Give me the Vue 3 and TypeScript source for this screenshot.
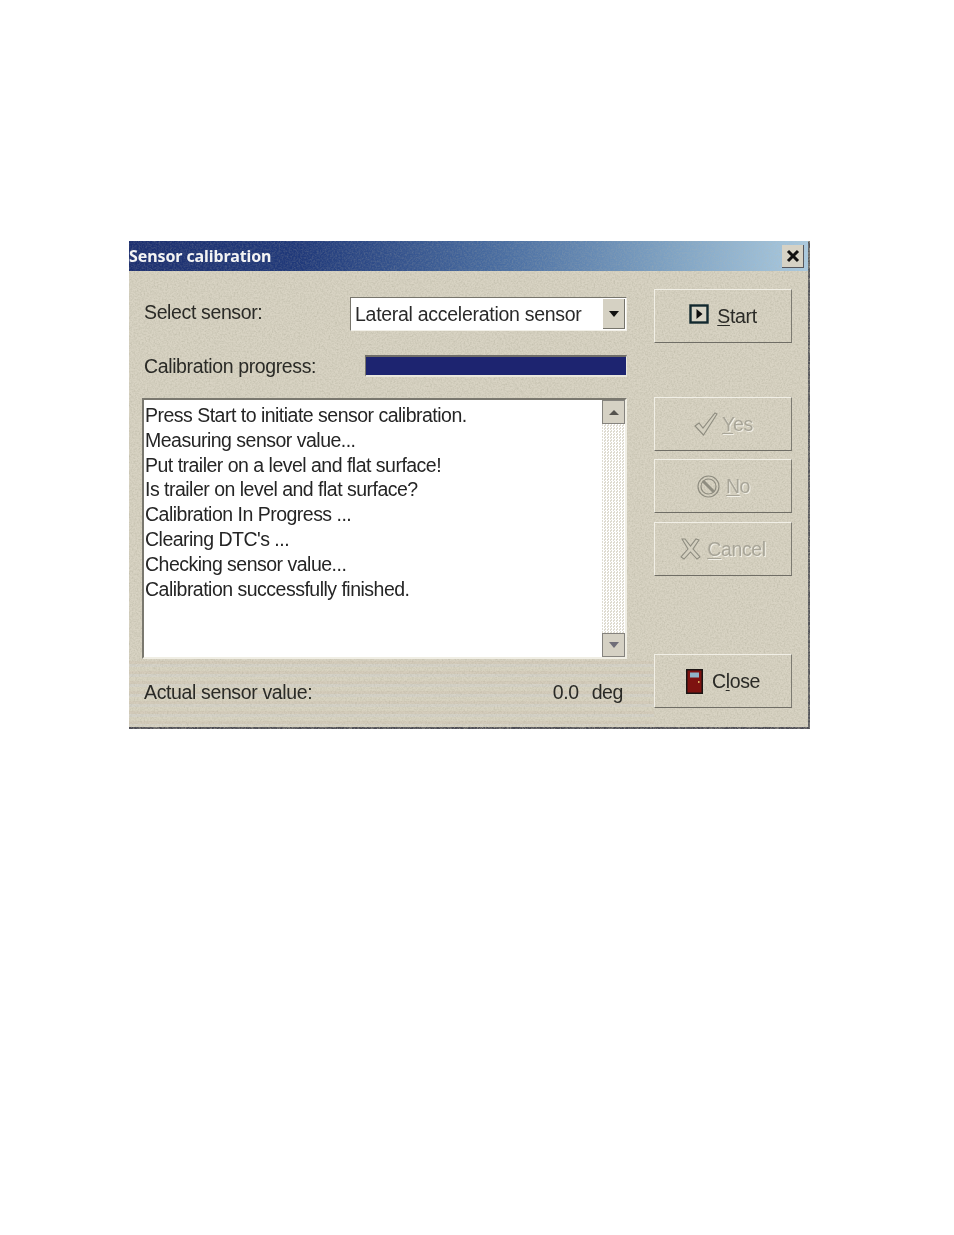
<script setup lang="ts">
const lines: string[] = [
  'Press Start to initiate sensor calibration.',
  'Measuring sensor value...',
  'Put trailer on a level and flat surface!',
  'Is trailer on level and flat surface?',
  'Calibration In Progress ...',
  "Clearing DTC's ...",
  'Checking sensor value...',
  'Calibration successfully finished.',
]
</script>

<template>
  <div class="page">
    <div class="window">
      <svg class="noise" width="681" height="488" aria-hidden="true">
        <filter id="grain" x="0" y="0" width="100%" height="100%">
          <feTurbulence type="fractalNoise" baseFrequency="0.6" numOctaves="2" seed="4" />
          <feColorMatrix type="matrix" values="0 0 0 0 0.50  0 0 0 0 0.48  0 0 0 0 0.38  0.9 0.9 0 0 -0.72" />
        </filter>
        <rect width="681" height="488" filter="url(#grain)" />
      </svg>
      <div class="moire"></div>

      <header class="titlebar">
        <svg class="noise faint" width="681" height="30" aria-hidden="true">
          <rect width="681" height="30" filter="url(#grain)" />
        </svg>
        <span class="title">Sensor calibration</span>
        <span class="close-x">
          <svg width="14" height="14" viewBox="0 0 14 14"><path d="M2 2 L12 12 M12 2 L2 12" stroke="#111" stroke-width="3" /></svg>
        </span>
      </header>

      <div class="body">
        <div class="left">
          <div class="row-select">
            <span class="label select-label">Select sensor:</span>
            <div class="combo">
              <span class="combo-text">Lateral acceleration sensor</span>
              <span class="combo-btn"><i class="tri-down"></i></span>
            </div>
          </div>
          <div class="row-progress">
            <span class="label">Calibration progress:</span>
            <div class="progress"></div>
          </div>
          <div class="list">
            <div class="list-text">
              <div v-for="line in lines" :key="line" class="line">{{ line }}</div>
            </div>
            <div class="scroll">
              <span class="scroll-btn"><i class="tri-up"></i></span>
              <span class="scroll-btn"><i class="tri-down grey"></i></span>
            </div>
          </div>
          <div class="row-value">
            <span class="label">Actual sensor value:</span>
            <span class="value"><span>0.0</span><span>deg</span></span>
          </div>
        </div>

        <div class="right">
          <button class="btn start">
            <svg width="20" height="20" viewBox="0 0 20 20">
              <rect x="1.500" y="1.500" width="17" height="17" fill="#d8d4c6" stroke="#12282e" stroke-width="2.400" />
              <path d="M7.500 5 L13.500 10 L7.500 15 Z" fill="#0c0c0c" />
            </svg>
            <span><u>S</u>tart</span>
          </button>
          <button class="btn off yes">
            <svg width="26" height="26" viewBox="0 0 26 26">
              <path d="M2 15 L6 12 L10 17 L22 2 L24 3 L10.500 24 Z" fill="#d4d0c0" stroke="#8f8d80" stroke-width="1.100" />
            </svg>
            <span><u>Y</u>es</span>
          </button>
          <button class="btn off no">
            <svg width="25" height="25" viewBox="0 0 25 25">
              <circle cx="12.500" cy="12.500" r="10.500" fill="none" stroke="#8f8d80" stroke-width="1.200" />
              <circle cx="12.500" cy="12.500" r="7.500" fill="none" stroke="#8f8d80" stroke-width="1.200" />
              <path d="M7 7 L18 18" stroke="#8f8d80" stroke-width="3" />
            </svg>
            <span><u>N</u>o</span>
          </button>
          <button class="btn off cancel">
            <svg width="21" height="22" viewBox="0 0 21 22">
              <path d="M2 1 L5 1 L10.500 8 L16 1 L19 2 L13 11 L20 19 L17 21 L10.500 14 L4 21 L1 19 L8 11 Z" fill="#d4d0c0" stroke="#8f8d80" stroke-width="1.100" />
            </svg>
            <span><u>C</u>ancel</span>
          </button>
          <button class="btn close">
            <svg width="17" height="25" viewBox="0 0 17 25">
              <rect width="17" height="25" fill="#1a1414" />
              <rect x="1.500" y="1.500" width="14" height="22" fill="#7e1210" />
              <rect x="4" y="3.500" width="9" height="5" fill="#8fb4c8" />
              <rect x="12" y="12" width="1.500" height="2" fill="#d8b060" />
            </svg>
            <span>C<u>l</u>ose</span>
          </button>
        </div>
      </div>
    </div>
  </div>
</template>

<style>
html, body { background: #fff; }
</style>

<style scoped>
.page {
  width: 954px;
  height: 1235px;
  padding: 241px 0 0 129px;
  box-sizing: border-box;
  background: #fff;
  font-family: "Liberation Sans", Arial, sans-serif;
  color: #2a2a26;
}
.window {
  position: relative;
  width: 681px;
  height: 488px;
  box-sizing: border-box;
  background: #d8d3c3;
  border-right: 2px solid #55565c;
  border-bottom: 2px solid #4c4c55;
  filter: blur(0.45px);
}
.noise { position: absolute; left: 0; top: 0; pointer-events: none; }
.noise.faint { opacity: 0.35; }
.moire {
  position: absolute;
  left: 0;
  top: 420px;
  width: 525px;
  height: 64px;
  background: repeating-linear-gradient(180deg, rgba(200, 180, 160, 0.2) 0 3px, rgba(205, 210, 220, 0.2) 3px 6px, rgba(220, 215, 185, 0.12) 6px 10px);
}
.titlebar {
  position: relative;
  height: 30px;
  display: flex;
  align-items: center;
  justify-content: space-between;
  background: linear-gradient(90deg, #1c2f70 0%, #20397a 25%, #4a6ea2 55%, #7fa3c4 80%, #aacae0 100%);
}
.title {
  position: relative;
  color: #f4f4f4;
  font-family: "Noto Sans", "Liberation Sans", sans-serif;
  font-weight: 700;
  font-size: 16px;
  letter-spacing: -0.1px;
  line-height: 33px;
}
.close-x {
  position: relative;
  width: 22px;
  height: 23px;
  margin-right: 4px;
  display: flex;
  align-items: center;
  justify-content: center;
  background: #d6d2c5;
  border-right: 1px solid #55565c;
  border-bottom: 1px solid #55565c;
  box-sizing: border-box;
}
.body {
  position: relative;
  display: flex;
  gap: 27px;
  padding: 0 0 0 13px;
}
.left { width: 485px; padding-top: 26px; }
.label {
  font-size: 19.500px;
  letter-spacing: -0.37px;
  line-height: 24px;
  padding-left: 2px;
}
.row-select {
  height: 34px;
  display: flex;
  justify-content: space-between;
}
.select-label { margin-top: 3px; }
.combo {
  width: 277px;
  height: 34px;
  box-sizing: border-box;
  background: #fff;
  border: 1px solid;
  border-color: #77756c #f2f0e8 #f2f0e8 #77756c;
  display: flex;
  align-items: center;
  justify-content: space-between;
  padding: 1px 1px 1px 4px;
}
.combo-text { font-size: 19.500px; letter-spacing: -0.28px; color: #2a2a2a; }
.combo-btn {
  width: 22px;
  height: 30px;
  background: #d5d1c3;
  border-right: 1px solid #77756c;
  border-bottom: 1px solid #77756c;
  box-sizing: border-box;
  display: flex;
  align-items: center;
  justify-content: center;
}
.tri-down {
  width: 0;
  height: 0;
  border: 5px solid transparent;
  border-top: 6px solid #111;
  border-bottom: 0;
}
.tri-down.grey { border-top-color: #6f6d78; }
.tri-up {
  width: 0;
  height: 0;
  border: 5px solid transparent;
  border-bottom: 5px solid #55534e;
  border-top: 0;
}
.row-progress {
  height: 22px;
  margin-top: 24px;
  display: flex;
  justify-content: space-between;
  align-items: center;
}
.progress {
  width: 262px;
  height: 22px;
  box-sizing: border-box;
  background: #1d2470;
  border-top: 2px solid #6f6d68;
  border-left: 1px solid #77756c;
  border-bottom: 2px solid #e8e6dc;
  border-right: 1px solid #e8e6dc;
}
.list {
  height: 261px;
  margin-top: 21px;
  box-sizing: border-box;
  background: #fff;
  border: 2px solid;
  border-color: #7a786f #f0eee4 #f0eee4 #7a786f;
  display: flex;
  justify-content: space-between;
}
.list-text { padding: 3px 0 0 1px; }
.line {
  font-size: 19.500px;
  line-height: 24.800px;
  letter-spacing: -0.51px;
  color: #252525;
  white-space: nowrap;
}
.scroll {
  width: 23px;
  background: repeating-conic-gradient(#fff 0 25%, #dedbd0 0 50%) 0 0 / 3px 3px;
  display: flex;
  flex-direction: column;
  justify-content: space-between;
}
.scroll-btn {
  width: 23px;
  height: 24px;
  box-sizing: border-box;
  background: #d5d1c4;
  border: 1.500px solid #85837e;
  display: flex;
  align-items: center;
  justify-content: center;
}
.row-value {
  display: flex;
  justify-content: space-between;
  margin-top: 21px;
  padding-right: 4px;
}
.value {
  display: flex;
  gap: 13px;
  font-size: 19.500px;
  line-height: 24px;
  letter-spacing: -0.4px;
}
.right {
  width: 138px;
  padding-top: 18px;
  display: flex;
  flex-direction: column;
}
.btn {
  width: 138px;
  height: 54px;
  padding: 0;
  box-sizing: border-box;
  background: transparent;
  border: 1.500px solid;
  border-color: #f1efe6 #7d7b72 #6f6d65 #f1efe6;
  display: flex;
  align-items: center;
  justify-content: center;
  gap: 8px;
  font-family: "Liberation Sans", Arial, sans-serif;
  font-size: 19.500px;
  letter-spacing: -0.35px;
  color: #2a2a26;
}
.start svg { margin-top: -4px; }
.btn u { text-underline-offset: 2px; text-decoration-thickness: 1px; }
.btn.off {
  color: #a8a598;
  text-shadow: 1px 1px 0 #f1efe6;
}
.yes { margin-top: 54px; gap: 3px; }
.no { margin-top: 8px; gap: 5px; }
.cancel { margin-top: 9px; gap: 6px; }
.close { margin-top: 78px; gap: 9px; }
</style>
